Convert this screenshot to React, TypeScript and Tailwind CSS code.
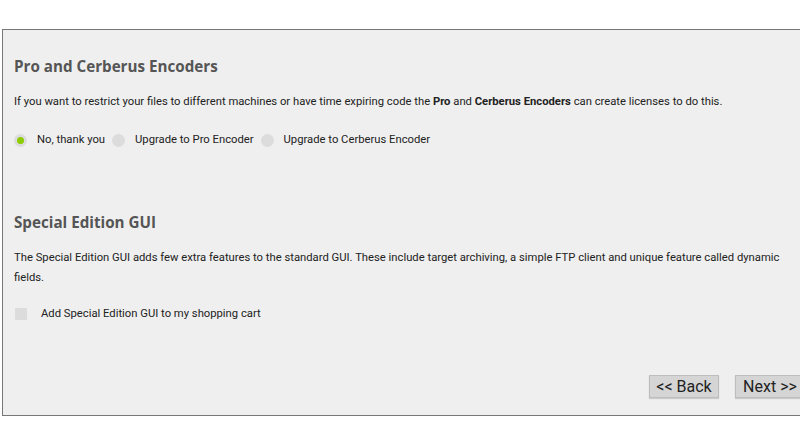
import { useState } from "react";

const options = ["No, thank you", "Upgrade to Pro Encoder", "Upgrade to Cerberus Encoder"];

export default function App() {
    const [choice, setChoice] = useState(0);
    const [addGui, setAddGui] = useState(false);

    return (
        <div className="w-[800px] h-[439px] overflow-hidden bg-white font-['Roboto',sans-serif] text-[#222]">
            <div className="mt-[29px] ml-[2px] w-[820px] h-[387px] border border-[#777] bg-[#efefef] pl-[11px] pt-[25px] flex flex-col">
                {/* Pro and Cerberus */}
                <h2 className="font-['Open_Sans',sans-serif] font-bold text-[15.2px] leading-[22px] text-[#555]">
                    Pro and Cerberus Encoders
                </h2>
                <p className="mt-[15px] text-[11.25px] leading-[20px] w-[776px]">
                    If you want to restrict your files to different machines or have time expiring code the{" "}
                    <b className="font-bold">Pro</b> and <b className="font-bold">Cerberus Encoders</b> can create
                    licenses to do this.
                </p>
                <div className="mt-[18px] flex items-center text-[11.25px] leading-[20px]">
                    {options.map((label, i) => (
                        <label
                            key={label}
                            className="flex items-center mr-[7px] cursor-pointer"
                            onClick={() => setChoice(i)}
                        >
                            <span className="w-[13px] h-[13px] rounded-full bg-[#dcdcdc] flex items-center justify-center mr-[10px]">
                                {choice === i && <span className="w-[7px] h-[7px] rounded-full bg-[#8ccc00]" />}
                            </span>
                            {label}
                        </label>
                    ))}
                </div>

                {/* Special Edition GUI */}
                <h2 className="mt-[61px] font-['Open_Sans',sans-serif] font-bold text-[15.2px] leading-[22px] text-[#555]">
                    Special Edition GUI
                </h2>
                <p className="mt-[15px] text-[11.25px] leading-[20px] w-[776px]">
                    The Special Edition GUI adds few extra features to the standard GUI. These include target archiving,
                    a simple FTP client and unique feature called dynamic fields.
                </p>
                <label
                    className="mt-[16px] flex items-center text-[11.25px] leading-[20px] cursor-pointer"
                    onClick={() => setAddGui(!addGui)}
                >
                    <span className="w-[12px] h-[12px] bg-[#dcdcdc] mr-[14px] ml-[1px] flex items-center justify-center text-[9px] text-[#8ccc00]">
                        {addGui ? "✓" : ""}
                    </span>
                    Add Special Edition GUI to my shopping cart
                </label>

                <div className="mt-[51px] w-[791px] flex justify-end gap-[16px]">
                    <button className="w-[70px] h-[23px] bg-[#d5d5d5] border border-[#bdbdbd] shadow-[0_1px_1px_rgba(0,0,0,0.15)] text-[16px] leading-[20px] text-[#222]">
                        &lt;&lt; Back
                    </button>
                    <button className="w-[70px] h-[23px] bg-[#d5d5d5] border border-[#bdbdbd] shadow-[0_1px_1px_rgba(0,0,0,0.15)] text-[16px] leading-[20px] text-[#222]">
                        Next &gt;&gt;
                    </button>
                </div>
            </div>
        </div>
    );
}
